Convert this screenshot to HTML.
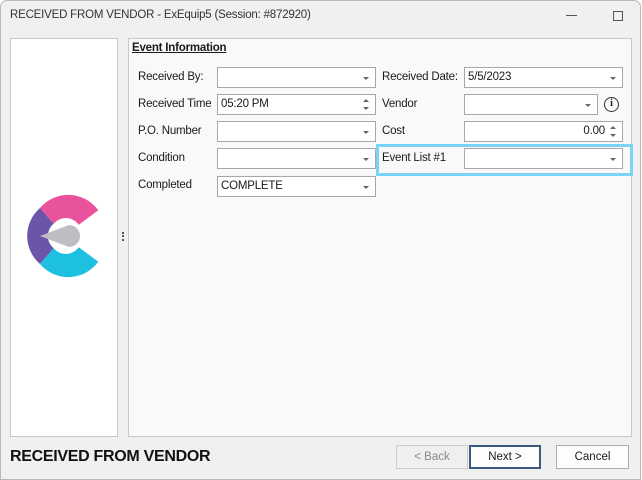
<!DOCTYPE html>
<html><head><style>
*{box-sizing:border-box;margin:0;padding:0}
body{width:642px;height:480px;background:#fff;font-family:"Liberation Sans",sans-serif;font-size:11.5px;color:#1a1a1a;position:relative;overflow:hidden}
.win{position:absolute;left:0;top:0;width:641px;height:480px;background:#f0f0f0;border:1px solid #b8b8b8;border-radius:7px 7px 0 0}
.title{position:absolute;left:10px;top:9px;font-size:11.5px;color:#333;letter-spacing:-0.2px}
.abs{position:absolute}
.lp{left:10px;top:38px;width:108px;height:399px;background:#fff;border:1px solid #c8c8c8}
.fp{left:128px;top:38px;width:504px;height:399px;background:#f9f9f9;border:1px solid #c8c8c8}
.lbl{position:absolute;font-size:11.5px;letter-spacing:-0.2px}
.fld{position:absolute;height:21px;background:#fff;border:1px solid #a8a8a8;padding:3px 0 0 3px;font-size:11.5px;letter-spacing:-0.2px}
.dd::after{content:"";position:absolute;right:6px;top:9px;border-left:3px solid transparent;border-right:3px solid transparent;border-top:3px solid #666}
.sp::before{content:"";position:absolute;right:6px;top:4px;border-left:3px solid transparent;border-right:3px solid transparent;border-bottom:3px solid #666}
.sp::after{content:"";position:absolute;right:6px;top:12px;border-left:3px solid transparent;border-right:3px solid transparent;border-top:3px solid #666}
.btn{position:absolute;top:445px;height:24px;border:1px solid #adadad;background:#fdfdfd;text-align:center;line-height:22px;font-size:11.5px}
</style></head><body>
<div class="win"></div>
<div class="title">RECEIVED FROM VENDOR - ExEquip5 (Session: #872920)</div>
<div class="abs" style="left:566px;top:15px;width:11px;height:1px;background:#555"></div>
<div class="abs" style="left:613px;top:11px;width:10px;height:10px;border:1px solid #555"></div>
<div class="abs lp"></div>
<svg class="abs" style="left:20px;top:190px" width="90" height="95" viewBox="20 190 90 95">
<path d="M98.3 210.3 A37 37 0 0 0 40 208 L53.6 223.7 A16 16 0 0 1 78.8 224.7 Z" fill="#e8539b"/>
<path d="M40 208 A37 37 0 0 0 40 264 L53.6 248.3 A16 16 0 0 1 53.6 223.7 Z" fill="#6a55a8"/>
<path d="M40 264 A37 37 0 0 0 98.3 261.7 L78.8 247.3 A16 16 0 0 1 53.6 248.3 Z" fill="#1ec0e0"/>
<path d="M40 236 L69 225 A11 11 0 0 1 69 247 Z" fill="#bdbdc2"/>
</svg>
<div class="abs" style="left:122px;top:232px;width:2px;height:9px;border-left:2px dotted #555"></div>
<div class="abs fp"></div>
<div class="lbl" style="left:132px;top:42px;font-weight:bold;text-decoration:underline">Event Information</div>

<div class="lbl" style="left:138px;top:71px">Received By:</div>
<div class="fld dd" style="left:217px;top:67px;width:159px"></div>
<div class="lbl" style="left:138px;top:98px">Received Time</div>
<div class="fld sp" style="left:217px;top:94px;width:159px">05:20 PM</div>
<div class="lbl" style="left:138px;top:125px">P.O. Number</div>
<div class="fld dd" style="left:217px;top:121px;width:159px"></div>
<div class="lbl" style="left:138px;top:152px">Condition</div>
<div class="fld dd" style="left:217px;top:148px;width:159px"></div>
<div class="lbl" style="left:138px;top:179px">Completed</div>
<div class="fld dd" style="left:217px;top:176px;width:159px">COMPLETE</div>

<div class="lbl" style="left:382px;top:71px">Received Date:</div>
<div class="fld dd" style="left:464px;top:67px;width:159px">5/5/2023</div>
<div class="lbl" style="left:382px;top:98px">Vendor</div>
<div class="fld dd" style="left:464px;top:94px;width:134px"></div>
<div class="abs" style="left:604px;top:97px;width:15px;height:15px;border:1.5px solid #333;border-radius:50%;font-size:10px;font-weight:bold;text-align:center;line-height:12px;font-family:'Liberation Serif',serif">i</div>
<div class="lbl" style="left:382px;top:125px">Cost</div>
<div class="fld sp" style="left:464px;top:121px;width:159px;text-align:right;padding-right:17px">0.00</div>
<div class="abs" style="left:376px;top:144px;width:257px;height:32px;border:3px solid #7dd3f5"></div>
<div class="lbl" style="left:382px;top:152px">Event List #1</div>
<div class="fld dd" style="left:464px;top:148px;width:159px"></div>

<div class="lbl" style="left:10px;top:448px;font-size:16px;font-weight:bold;color:#111;letter-spacing:-0.3px">RECEIVED FROM VENDOR</div>
<div class="btn" style="left:396px;width:72px;background:#efefef;color:#888;border-color:#ccc">&lt; Back</div>
<div class="btn" style="left:469px;width:72px;border:2px solid #3c5a80;line-height:20px">Next &gt;</div>
<div class="btn" style="left:556px;width:73px">Cancel</div>
</body></html>
